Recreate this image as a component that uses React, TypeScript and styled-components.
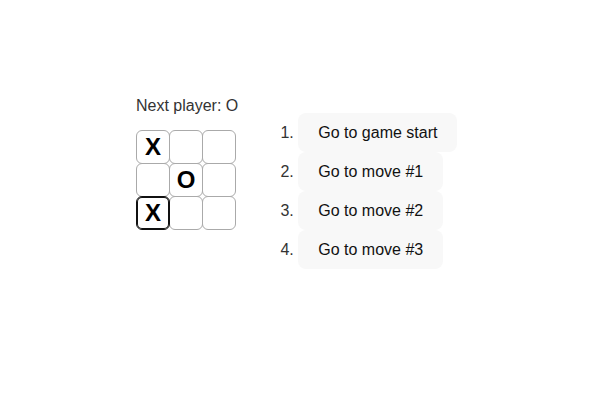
import React from 'react'
import styled, { createGlobalStyle } from 'styled-components'

const GlobalStyle = createGlobalStyle`
  body {
    margin: 0;
    font-family: "Liberation Sans", Arial, sans-serif;
    font-size: 16px;
    color: #222;
    background: #fff;
  }
`;

const squares: (string | null)[] = ['X', null, null, null, 'O', null, 'X', null, null];
const focusedIndex = 6;
const moves = ['Go to game start', 'Go to move #1', 'Go to move #2', 'Go to move #3'];

const Game = () => {
  return (
    <>
      <GlobalStyle />
      <GameStyle>
        <BoardColumn>
          <Status>Next player: O</Status>
          <Board>
            {[0, 1, 2].map((row) => (
              <BoardRow key={row}>
                {[0, 1, 2].map((col) => {
                  const i = row * 3 + col;
                  return (
                    <Square key={i} $focused={i === focusedIndex}>
                      {squares[i]}
                    </Square>
                  );
                })}
              </BoardRow>
            ))}
          </Board>
        </BoardColumn>

        <MoveList>
          {moves.map((label) => (
            <MoveItem key={label}>
              <MoveButton>{label}</MoveButton>
            </MoveItem>
          ))}
        </MoveList>
      </GameStyle>
    </>
  )
}

const GameStyle = styled.div`
  display: flex;
  flex-direction: row;
  padding: 97px 0 0 136px;
`;

const BoardColumn = styled.div`
  display: flex;
  flex-direction: column;
`;

const Status = styled.div`
  line-height: 18px;
  margin-bottom: 15px;
  color: #333;
`;

const Board = styled.div`
  display: flex;
  flex-direction: column;
`;

const BoardRow = styled.div`
  display: flex;
  flex-direction: row;
  margin-top: -1px;

  &:first-child { margin-top: 0; }
`;

const Square = styled.button<{ $focused?: boolean }>`
  width: 34px;
  height: 34px;
  padding: 0;
  margin-right: -1px;
  background: #fff;
  border: 1px solid ${({ $focused }) => ($focused ? '#111' : '#aaa')};
  box-shadow: ${({ $focused }) => ($focused ? 'inset 0 0 0 1px #111' : 'none')};
  border-radius: 6px;
  font-family: "Liberation Sans", Arial, sans-serif;
  font-size: 24px;
  font-weight: bold;
  line-height: 32px;
  text-align: center;
  color: #000;
  position: relative;
  z-index: ${({ $focused }) => ($focused ? 1 : 0)};
`;

const MoveList = styled.ol`
  margin: 16px 0 0 20px;
  padding-left: 40px;
  color: #333;
`;

const MoveItem = styled.li`
  line-height: 19px;
`;

const MoveButton = styled.button`
  padding: 10px 20px;
  border: none;
  border-radius: 8px;
  background: #f8f8f8;
  font-family: "Liberation Sans", Arial, sans-serif;
  font-size: 16px;
  line-height: 19px;
  color: #111;
`;

export default Game
